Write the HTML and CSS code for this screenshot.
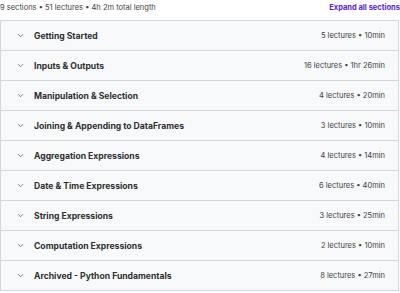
FILE: index.html
```html
<!DOCTYPE html>
<html>
<head>
<meta charset="utf-8">
<link rel="stylesheet" href="styles.css">
</head>
<body>
<div class="page">
  <div class="top">
    <span class="summary">9 sections • 51 lectures • 4h 2m total length</span>
    <span class="expand">Expand all sections</span>
  </div>
  <div class="list">
    <div class="row"><span class="chev"><svg width="7" height="5" viewBox="0 0 7 5"><path d="M1 1.2 L3.5 3.7 L6 1.2" fill="none" stroke="#6a6f73" stroke-width="0.9"/></svg></span><span class="title">Getting Started</span><span class="meta">5 lectures • 10min</span></div>
    <div class="row"><span class="chev"><svg width="7" height="5" viewBox="0 0 7 5"><path d="M1 1.2 L3.5 3.7 L6 1.2" fill="none" stroke="#6a6f73" stroke-width="0.9"/></svg></span><span class="title">Inputs &amp; Outputs</span><span class="meta">16 lectures • 1hr 26min</span></div>
    <div class="row"><span class="chev"><svg width="7" height="5" viewBox="0 0 7 5"><path d="M1 1.2 L3.5 3.7 L6 1.2" fill="none" stroke="#6a6f73" stroke-width="0.9"/></svg></span><span class="title">Manipulation &amp; Selection</span><span class="meta">4 lectures • 20min</span></div>
    <div class="row"><span class="chev"><svg width="7" height="5" viewBox="0 0 7 5"><path d="M1 1.2 L3.5 3.7 L6 1.2" fill="none" stroke="#6a6f73" stroke-width="0.9"/></svg></span><span class="title">Joining &amp; Appending to DataFrames</span><span class="meta">3 lectures • 10min</span></div>
    <div class="row"><span class="chev"><svg width="7" height="5" viewBox="0 0 7 5"><path d="M1 1.2 L3.5 3.7 L6 1.2" fill="none" stroke="#6a6f73" stroke-width="0.9"/></svg></span><span class="title">Aggregation Expressions</span><span class="meta">4 lectures • 14min</span></div>
    <div class="row"><span class="chev"><svg width="7" height="5" viewBox="0 0 7 5"><path d="M1 1.2 L3.5 3.7 L6 1.2" fill="none" stroke="#6a6f73" stroke-width="0.9"/></svg></span><span class="title">Date &amp; Time Expressions</span><span class="meta">6 lectures • 40min</span></div>
    <div class="row"><span class="chev"><svg width="7" height="5" viewBox="0 0 7 5"><path d="M1 1.2 L3.5 3.7 L6 1.2" fill="none" stroke="#6a6f73" stroke-width="0.9"/></svg></span><span class="title">String Expressions</span><span class="meta">3 lectures • 25min</span></div>
    <div class="row"><span class="chev"><svg width="7" height="5" viewBox="0 0 7 5"><path d="M1 1.2 L3.5 3.7 L6 1.2" fill="none" stroke="#6a6f73" stroke-width="0.9"/></svg></span><span class="title">Computation Expressions</span><span class="meta">2 lectures • 10min</span></div>
    <div class="row"><span class="chev"><svg width="7" height="5" viewBox="0 0 7 5"><path d="M1 1.2 L3.5 3.7 L6 1.2" fill="none" stroke="#6a6f73" stroke-width="0.9"/></svg></span><span class="title">Archived - Python Fundamentals</span><span class="meta">8 lectures • 27min</span></div>
  </div>
</div>
</body>
</html>
```
FILE: styles.css
```css
html, body {
  margin: 0;
  padding: 0;
  background: #ffffff;
}
body {
  font-family: Inter, "Noto Sans", sans-serif;
  color: #2d2f31;
}
.page {
  width: 399px;
}
.top {
  display: flex;
  justify-content: space-between;
  align-items: flex-start;
  height: 20px;
  box-sizing: border-box;
  padding-top: 3px;
}
.summary {
  font-size: 7.5px;
  line-height: 9px;
  color: #3e4143;
}
.expand {
  font-size: 7.5px;
  line-height: 9px;
  font-weight: 700;
  color: #5624d0;
  margin-right: -1px;
}
.list {
  border: 1px solid #d1d7dc;
  border-bottom: none;
}
.row {
  display: flex;
  align-items: center;
  height: 29px;
  background: #f7f9fa;
  border-bottom: 1px solid #d1d7dc;
  padding: 0 13px 0 16px;
}
.chev {
  display: flex;
  width: 17px;
}
.title {
  font-size: 8.6px;
  font-weight: 700;
  flex: 1;
}
.meta {
  font-size: 7.5px;
  color: #3e4143;
}
```
